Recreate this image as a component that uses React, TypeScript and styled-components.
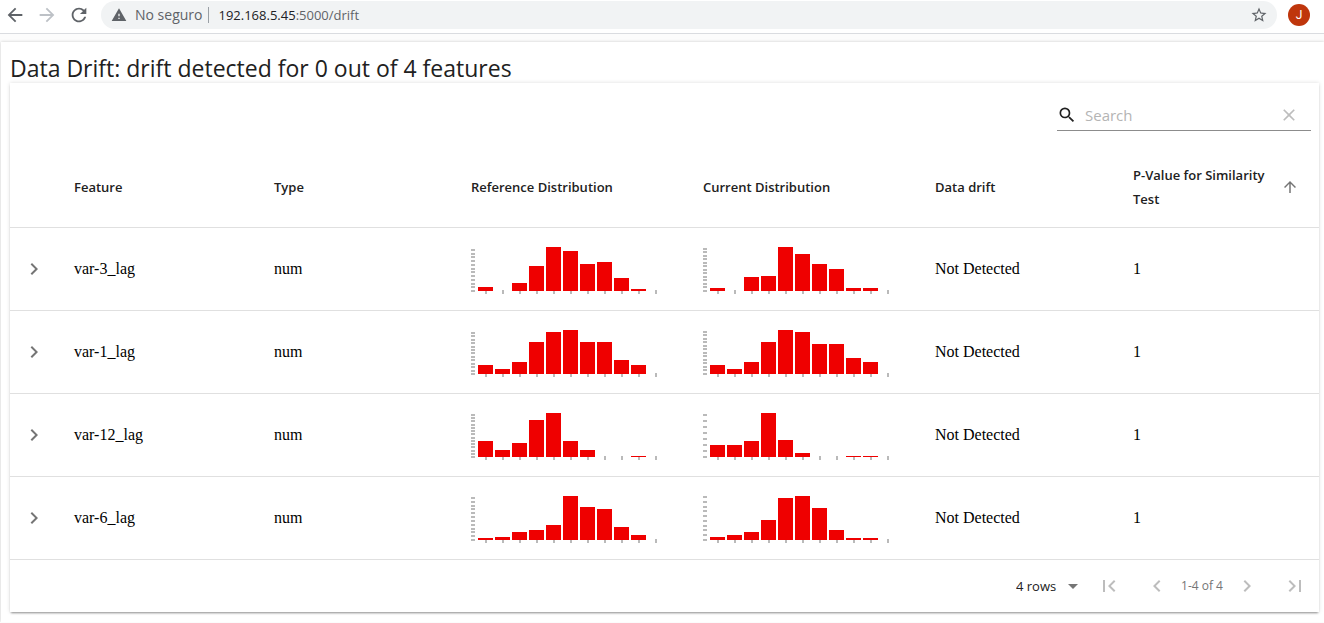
import React from "react";
import styled, { createGlobalStyle } from "styled-components";
import {
  MdArrowBack,
  MdArrowDropDown,
  MdArrowForward,
  MdArrowUpward,
  MdChevronLeft,
  MdChevronRight,
  MdClear,
  MdFirstPage,
  MdLastPage,
  MdRefresh,
  MdSearch,
  MdStarBorder,
  MdWarning,
} from "react-icons/md";

const GlobalStyle = createGlobalStyle`
  *, *::before, *::after { box-sizing: border-box; }
  body {
    margin: 0;
    background: #fcfcfc;
    color: #212121;
    font-family: "Open Sans", "Noto Sans", sans-serif;
    font-size: 14px;
  }
  svg { display: block; flex: none; }
`;

const BrowserBar = styled.header`
  display: flex;
  align-items: center;
  height: 34px;
  padding: 1px 14px 4px 4px;
  gap: 10px;
  background: #fff;
  border-bottom: 1px solid #dadce0;
`;

const IconButton = styled.button<{ $size?: number; $color?: string }>`
  display: flex;
  flex: none;
  align-items: center;
  justify-content: center;
  width: ${(p) => p.$size ?? 48}px;
  height: ${(p) => p.$size ?? 48}px;
  padding: 0;
  border: 0;
  background: none;
  color: ${(p) => p.$color ?? "#bdbdbd"};
  cursor: pointer;
`;

const AddressBar = styled.div`
  display: flex;
  flex: 1;
  align-items: center;
  height: 28px;
  margin: 0 1px;
  padding: 0 7px 0 10px;
  border-radius: 14px;
  background: #f1f3f4;
  color: #5f6368;
`;

const Security = styled.span`
  margin-left: 8px;
  padding-right: 6px;
  border-right: 1px solid #9aa0a6;
  line-height: 16px;
`;

const Address = styled.a`
  flex: 1;
  margin-left: 9px;
  color: #5f6368;
  font-size: 13px;
  text-decoration: none;
`;

const Host = styled.span`
  color: #202124;
`;

const Avatar = styled.button`
  width: 22px;
  height: 22px;
  padding: 0;
  border: 0;
  border-radius: 50%;
  background: #bf360c;
  color: #fff;
  font: 12px Roboto, sans-serif;
`;

const Page = styled.main`
  margin: 8px 0 0 1px;
  padding: 12px 5px 10px 9px;
  background: #fff;
  box-shadow: 0 0 3px rgba(0, 0, 0, 0.2);
`;

const Title = styled.h1`
  margin: 0;
  font-size: 23px;
  font-weight: 400;
  line-height: 29px;
`;

const Card = styled.section`
  background: #fff;
  box-shadow: 0 2px 2px -1px rgba(0, 0, 0, 0.4), 0 0 4px rgba(0, 0, 0, 0.14);
`;

const CardToolbar = styled.div`
  display: flex;
  align-items: center;
  justify-content: flex-end;
  height: 64px;
  padding: 0 8px 0 24px;
`;

const SearchField = styled.label`
  display: flex;
  align-items: center;
  width: 254px;
  height: 32px;
  border-bottom: 1px solid #8c8c8c;
`;

const SearchInput = styled.input`
  flex: 1;
  min-width: 0;
  margin-left: 8px;
  padding: 0;
  border: 0;
  outline: 0;
  background: none;
  font: 400 15px "Open Sans", sans-serif;
  &::placeholder { color: #b4b4b4; opacity: 1; }
`;

const Table = styled.table`
  width: 100%;
  table-layout: fixed;
  border-collapse: collapse;
`;

const Column = styled.col<{ $width: number }>`
  width: ${(p) => p.$width}px;
`;

const HeadCell = styled.th`
  height: 80px;
  padding: 0 16px;
  border-bottom: 1px solid #e0e0e0;
  font-size: 13px;
  font-weight: 600;
  line-height: 24px;
  text-align: left;
`;

const SortButton = styled.button`
  display: flex;
  align-items: center;
  justify-content: space-between;
  width: 100%;
  padding: 0 4px 0 0;
  border: 0;
  background: none;
  color: inherit;
  font: inherit;
  text-align: left;
  svg { color: #757575; }
`;

const Cell = styled.td<{ $flush?: boolean }>`
  height: 83px;
  padding: ${(p) => (p.$flush ? "0" : "0 16px")};
  border-bottom: 1px solid #e0e0e0;
  color: #000;
  font-family: "Liberation Serif", serif;
  font-size: 16px;
`;

const Footer = styled.footer`
  display: flex;
  align-items: center;
  justify-content: flex-end;
  height: 52px;
`;

const RowsField = styled.label`
  display: grid;
  align-items: center;
  width: 69px;
  > * { grid-area: 1 / 1; }
  svg { justify-self: end; color: #757575; pointer-events: none; }
`;

const RowsSelect = styled.select`
  width: 100%;
  height: 32px;
  padding: 0;
  border: 0;
  appearance: none;
  background: none;
  color: #212121;
  font: 13px "Open Sans", sans-serif;
`;

const PageInfo = styled.span`
  width: 42px;
  color: #757575;
  font-size: 12px;
  text-align: center;
  white-space: nowrap;
`;

interface Distribution {
  bars: number[];
  ticks: number;
  span: number;
}

interface Feature {
  name: string;
  type: string;
  reference: Distribution;
  current: Distribution;
  drift: string;
  pValue: number;
}

const features: Feature[] = [
  {
    name: "var-3_lag",
    type: "num",
    reference: { bars: [4, 0, 8, 25, 44, 40, 27, 29, 13, 2], ticks: 12, span: 41 },
    current: { bars: [3, 0, 14, 15, 44, 37, 27, 22, 3, 3], ticks: 13, span: 42 },
    drift: "Not Detected",
    pValue: 1,
  },
  {
    name: "var-1_lag",
    type: "num",
    reference: { bars: [9, 5, 12, 32, 42, 44, 32, 32, 14, 9], ticks: 13, span: 41 },
    current: { bars: [9, 5, 12, 32, 44, 42, 30, 30, 16, 12], ticks: 13, span: 42 },
    drift: "Not Detected",
    pValue: 1,
  },
  {
    name: "var-12_lag",
    type: "num",
    reference: { bars: [16, 7, 14, 37, 44, 16, 7, 0, 0, 1], ticks: 14, span: 42 },
    current: { bars: [12, 12, 16, 44, 17, 4, 0, 0, 1, 1], ticks: 8, span: 42 },
    drift: "Not Detected",
    pValue: 1,
  },
  {
    name: "var-6_lag",
    type: "num",
    reference: { bars: [2, 3, 8, 10, 15, 44, 33, 31, 13, 5], ticks: 12, span: 42 },
    current: { bars: [3, 5, 8, 20, 42, 44, 32, 10, 2, 2], ticks: 10, span: 43 },
    drift: "Not Detected",
    pValue: 1,
  },
];

const columnWidths = [48, 200, 197, 232, 232, 198, 202];
const BASELINE = 47;

function Histogram({ data, label }: { data: Distribution; label: string }) {
  const step = data.span / (data.ticks - 1);
  return (
    <svg width="190" height="50" role="img" aria-label={label} shapeRendering="crispEdges">
      <g fill="#bababa">
        {Array.from({ length: data.ticks }, (_, i) => (
          <rect key={i} x={0} y={BASELINE - 1 - Math.round(i * step)} width={4} height={2} />
        ))}
        {Array.from({ length: data.bars.length + 1 }, (_, i) => (
          <rect key={i} x={14 + i * 17} y={BASELINE - 1} width={2} height={4} />
        ))}
      </g>
      <g fill="#ef0000">
        {data.bars.map((h, i) => (
          <rect key={i} x={7 + i * 17} y={BASELINE - h} width={15} height={h} />
        ))}
      </g>
    </svg>
  );
}

export default function App() {
  return (
    <>
      <GlobalStyle />
      <BrowserBar>
        <IconButton $size={22} $color="#5f6368" aria-label="Back"><MdArrowBack size={22} /></IconButton>
        <IconButton $size={22} $color="#bdc1c6" aria-label="Forward"><MdArrowForward size={22} /></IconButton>
        <IconButton $size={22} $color="#5f6368" aria-label="Reload"><MdRefresh size={22} /></IconButton>
        <AddressBar>
          <MdWarning size={16} />
          <Security>No seguro</Security>
          <Address href="#drift"><Host>192.168.5.45</Host>:5000/drift</Address>
          <IconButton $size={22} $color="#5f6368" aria-label="Bookmark this page"><MdStarBorder size={18} /></IconButton>
        </AddressBar>
        <Avatar aria-label="Profile J">J</Avatar>
      </BrowserBar>
      <Page>
        <Title>Data Drift: drift detected for 0 out of 4 features</Title>
        <Card>
          <CardToolbar>
            <SearchField>
              <MdSearch size={20} />
              <SearchInput type="text" placeholder="Search" aria-label="Search" />
              <IconButton $size={44} aria-label="Clear search"><MdClear size={20} /></IconButton>
            </SearchField>
          </CardToolbar>
          <Table>
            <colgroup>
              {columnWidths.map((w, i) => <Column key={i} $width={w} />)}
            </colgroup>
            <thead>
              <tr>
                <HeadCell />
                <HeadCell>Feature</HeadCell>
                <HeadCell>Type</HeadCell>
                <HeadCell>Reference Distribution</HeadCell>
                <HeadCell>Current Distribution</HeadCell>
                <HeadCell>Data drift</HeadCell>
                <HeadCell aria-sort="ascending">
                  <SortButton>P-Value for Similarity Test<MdArrowUpward size={18} /></SortButton>
                </HeadCell>
              </tr>
            </thead>
            <tbody>
              {features.map((f) => (
                <tr key={f.name}>
                  <Cell $flush>
                    <IconButton $color="#757575" aria-label={`Expand ${f.name}`}><MdChevronRight size={24} /></IconButton>
                  </Cell>
                  <Cell>{f.name}</Cell>
                  <Cell>{f.type}</Cell>
                  <Cell><Histogram data={f.reference} label={`${f.name} reference`} /></Cell>
                  <Cell><Histogram data={f.current} label={`${f.name} current`} /></Cell>
                  <Cell>{f.drift}</Cell>
                  <Cell>{f.pValue}</Cell>
                </tr>
              ))}
            </tbody>
          </Table>
          <Footer>
            <RowsField>
              <RowsSelect aria-label="Rows per page" defaultValue="4">
                <option value="4">4 rows</option>
                <option value="10">10 rows</option>
              </RowsSelect>
              <MdArrowDropDown size={24} />
            </RowsField>
            <IconButton aria-label="First page"><MdFirstPage size={24} /></IconButton>
            <IconButton aria-label="Previous page"><MdChevronLeft size={24} /></IconButton>
            <PageInfo>1-4 of 4</PageInfo>
            <IconButton aria-label="Next page"><MdChevronRight size={24} /></IconButton>
            <IconButton aria-label="Last page"><MdLastPage size={24} /></IconButton>
          </Footer>
        </Card>
      </Page>
    </>
  );
}
